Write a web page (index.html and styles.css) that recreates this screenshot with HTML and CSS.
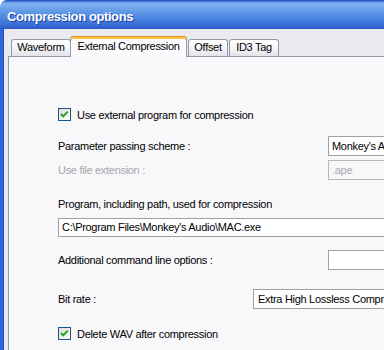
FILE: index.html
```html
<!DOCTYPE html>
<html lang="en">
<head>
  <meta charset="UTF-8">
  <meta name="viewport" content="width=device-width, initial-scale=1.0">
  <title>Compression options</title>
  <link rel="stylesheet" href="styles.css">
</head>
<body>
  <div class="window">
    <div class="titlebar">
      <span class="title">Compression options</span>
    </div>
    <div class="frame">
      <div class="tabs">
        <div class="tab tab-waveform">Waveform</div>
        <div class="tab tab-active">External Compression</div>
        <div class="tab tab-offset">Offset</div>
        <div class="tab tab-id3">ID3 Tag</div>
      </div>
      <div class="panel">
        <div class="row row-check">
          <span class="checkbox">
            <svg width="13" height="13" viewBox="0 0 13 13">
              <defs>
                <linearGradient id="boxfill" x1="0" y1="0" x2="1" y2="1">
                  <stop offset="0" stop-color="#dcdcd7"/>
                  <stop offset="1" stop-color="#ffffff"/>
                </linearGradient>
              </defs>
              <rect x="0.5" y="0.5" width="12" height="12" fill="url(#boxfill)" stroke="#1c5180"/>
              <polyline points="3,6 5.2,8.4 9.8,3.6" fill="none" stroke="#21a121" stroke-width="2"/>
            </svg>
          </span>
          <span class="check-text">Use external program for compression</span>
        </div>

        <div class="row row-scheme">
          <span class="label">Parameter passing scheme :</span>
          <div class="field">Monkey's Audio</div>
        </div>

        <div class="row row-ext">
          <span class="label label-disabled">Use file extension :</span>
          <div class="field field-disabled">.ape</div>
        </div>

        <div class="row row-caption">
          <span class="label">Program, including path, used for compression</span>
        </div>

        <div class="row row-path">
          <div class="field field-wide">C:\Program Files\Monkey's Audio\MAC.exe</div>
        </div>

        <div class="row row-options">
          <span class="label">Additional command line options :</span>
          <div class="field"></div>
        </div>

        <div class="row row-bitrate">
          <span class="label label-short">Bit rate :</span>
          <div class="field field-select">Extra High Lossless Compression</div>
        </div>

        <div class="row row-check row-delete">
          <span class="checkbox">
            <svg width="13" height="13" viewBox="0 0 13 13">
              <rect x="0.5" y="0.5" width="12" height="12" fill="url(#boxfill)" stroke="#1c5180"/>
              <polyline points="3,6 5.2,8.4 9.8,3.6" fill="none" stroke="#21a121" stroke-width="2"/>
            </svg>
          </span>
          <span class="check-text">Delete WAV after compression</span>
        </div>
      </div>
    </div>
  </div>
</body>
</html>
```

FILE: styles.css
```css
body {
  margin: 0;
  padding: 0;
  background-color: #ffffff;
  overflow: hidden;
  font-family: "Liberation Sans", Arial, sans-serif;
  font-size: 11px;
  letter-spacing: -0.3px;
  color: #000;
}

.window {
  width: 520px;
  height: 350px;
  overflow: hidden;
  border-radius: 7px 0 0 0;
  background-color: #ebeaef;
}

.titlebar {
  height: 29px;
  box-sizing: border-box;
  padding: 3px 0 0 7px;
  display: flex;
  align-items: center;
  background: linear-gradient(#3b6fd6 0, #7db0ef 8%, #6ea5eb 25%, #4f8be2 55%, #3a6fd6 85%, #2b58c6 100%);
  border-top: 1px solid #2a57c8;
}

.title {
  color: #fff;
  font-weight: bold;
  font-size: 13px;
  letter-spacing: -0.4px;
  text-shadow: 1px 1px 0 #1c3e9e;
}

.frame {
  border-left: 3px solid #2f66d8;
  box-shadow: inset 1px 0 0 #1f4fc2;
  padding: 7px 0 0 5px;
  height: 330px;
}

.tabs {
  display: flex;
  align-items: flex-end;
  padding-left: 3px;
  position: relative;
  z-index: 1;
}

.tab {
  box-sizing: border-box;
  height: 17px;
  line-height: 15px;
  text-align: center;
  border: 1px solid #919ba8;
  border-bottom: none;
  border-radius: 3px 3px 0 0;
  background: linear-gradient(#ffffff, #f4f4f7 55%, #e2e3ea);
}

.tab-waveform {
  width: 60px;
  margin-right: -1px;
}

.tab-active {
  width: 117px;
  height: 21px;
  line-height: 19px;
  margin-bottom: -1px;
  border-top: 1px solid #e68b2c;
  box-shadow: inset 0 2px 0 #ffc83c;
  background: #fbfbfd;
  position: relative;
}

.tab-offset {
  width: 40px;
  margin-left: 1px;
}

.tab-id3 {
  width: 50px;
  margin-left: 1px;
}

.panel {
  border: 1px solid #919ba8;
  background-color: #f8f8fb;
  height: 400px;
  padding: 51px 0 0 49px;
}

.row {
  display: flex;
  align-items: center;
}

.row-check {
  height: 13px;
}

.checkbox {
  width: 13px;
  height: 13px;
  display: block;
  margin-right: 6px;
}

.checkbox svg {
  display: block;
}

.label {
  width: 270px;
  flex-shrink: 0;
}

.label-disabled {
  color: #a7a6aa;
}

.label-short {
  width: 195px;
}

.field {
  box-sizing: border-box;
  width: 160px;
  height: 20px;
  line-height: 18px;
  padding-left: 3px;
  border: 1px solid #a0a0a0;
  background-color: #fff;
  white-space: nowrap;
  overflow: hidden;
}

.field-disabled {
  border-color: #b9b9b9;
  background-color: #f8f8fb;
  color: #a7a6aa;
}

.field-wide {
  width: 400px;
  height: 19px;
  line-height: 17px;
}

.field-select {
  width: 200px;
  padding-left: 4px;
}

.row-scheme {
  margin-top: 15px;
}

.row-ext {
  margin-top: 4px;
}

.row-caption {
  margin-top: 17px;
  height: 13px;
}

.row-path {
  margin-top: 8px;
}

.row-options {
  margin-top: 13px;
}

.row-bitrate {
  margin-top: 19px;
}

.row-delete {
  margin-top: 18px;
}
```
